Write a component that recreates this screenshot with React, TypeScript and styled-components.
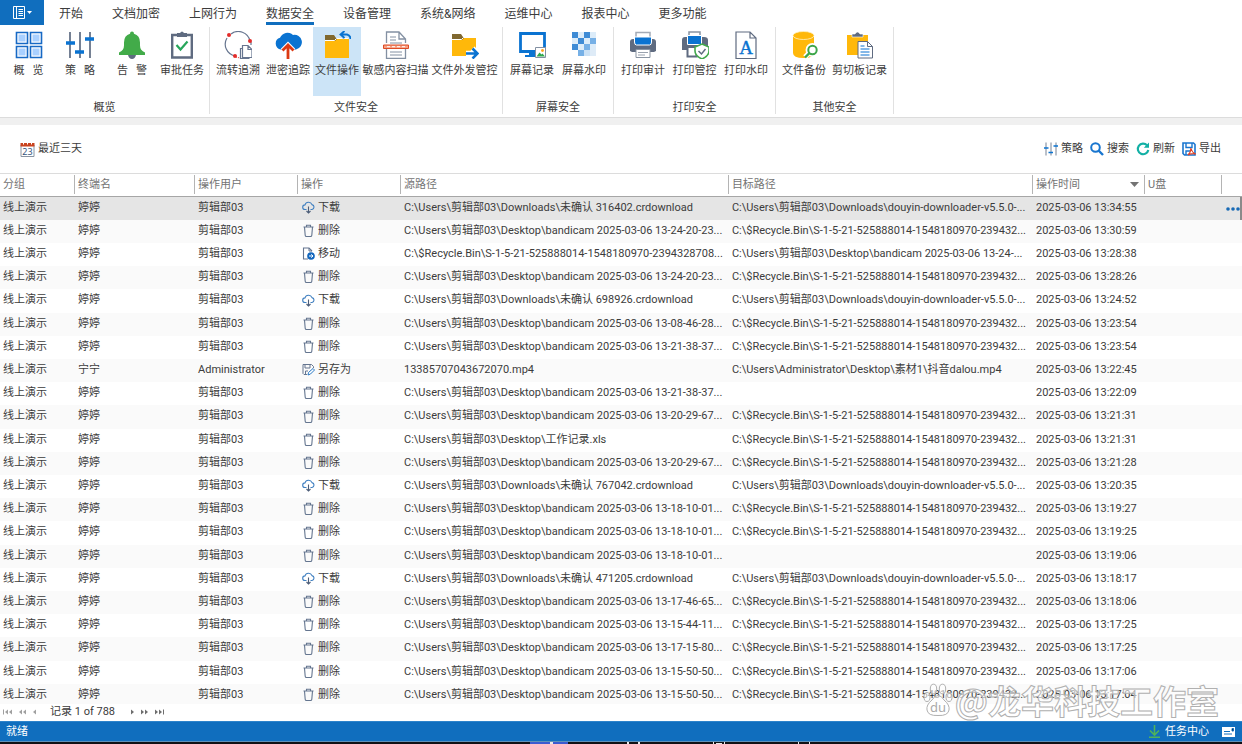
import React from "react";
import styled, { createGlobalStyle } from "styled-components";

const Global = createGlobalStyle`
  * { box-sizing: border-box; }
  html, body { margin: 0; background: #fff; }
  body, button, table {
    font-family: Roboto, "Noto Sans CJK SC", sans-serif;
    font-size: 11px;
    line-height: 16px;
    color: #3c3c3c;
  }
  button { border: 0; padding: 0; background: none; cursor: pointer; }
  svg { display: block; flex: none; }
`;

const Page = styled.div`
  position: relative;
  display: flex;
  flex-direction: column;
  height: 100vh;
  overflow: hidden;
`;

const TabBar = styled.nav`
  display: flex;
  align-items: stretch;
  height: 25px;
  flex: none;
  gap: 29px;
`;

const AppButton = styled.button`
  display: flex;
  align-items: center;
  justify-content: center;
  gap: 2px;
  width: 44px;
  margin-right: -14px;
  background: #106ebe;
`;

const Tab = styled.button<{ $active?: boolean }>`
  font-size: 12px;
  padding-top: 5px;
  white-space: nowrap;
  border-bottom: 3px solid ${(p) => (p.$active ? "#106ebe" : "transparent")};
`;

const Ribbon = styled.div`
  display: flex;
  flex: none;
  height: 93px;
  padding: 2px 0 3px;
  border-bottom: 1px solid #dcdcdc;
`;

const Group = styled.section`
  display: flex;
  flex-direction: column;
  justify-content: space-between;
  padding: 0 3px;
  border-right: 1px solid #e1e1e1;
`;

const GroupItems = styled.div`
  display: flex;
`;

const GroupTitle = styled.div`
  text-align: center;
  line-height: 12px;
`;

const RibbonButton = styled.button<{ $width: number; $active?: boolean }>`
  display: flex;
  flex-direction: column;
  align-items: center;
  gap: 4px;
  width: ${(p) => p.$width}px;
  height: 69px;
  padding-top: 4px;
  white-space: pre;
  background: ${(p) => (p.$active ? "#cce4f7" : "none")};
`;

const Band = styled.div`
  flex: none;
  height: 7px;
  background: #f0f0f0;
`;

const Toolbar = styled.div`
  display: flex;
  flex: none;
  align-items: center;
  justify-content: space-between;
  height: 48px;
  padding: 0 21px 0 20px;
`;

const Tools = styled.div`
  display: flex;
  gap: 7px;
`;

const ToolButton = styled.button`
  display: flex;
  align-items: center;
  gap: 3px;
`;

const TableArea = styled.main`
  flex: 1;
  min-height: 0;
  overflow: hidden;
  border-top: 1px solid #dcdcdc;
`;

const Table = styled.table`
  width: 100%;
  table-layout: fixed;
  border-collapse: separate;
  border-spacing: 0;
`;

const Col = styled.col<{ $width?: string }>`
  width: ${(p) => p.$width ?? "auto"};
`;

const HeadCell = styled.th`
  height: 23px;
  padding: 1px 0 2px;
  border-bottom: 1px solid #a6a6a6;
  font-weight: 400;
  text-align: left;
  color: #737373;
`;

const HeadInner = styled.div<{ $last?: boolean }>`
  display: flex;
  align-items: center;
  justify-content: space-between;
  height: 19px;
  padding: 0 5px 0 3px;
  border-right: ${(p) => (p.$last ? "0" : "1px solid #b4b4b4")};
`;

const Row = styled.tr<{ $selected?: boolean }>`
  height: 23px;
  background: ${(p) => (p.$selected ? "#e5e5e5" : "#fff")};
  &:nth-child(even) { background: #fafafa; }
  &:nth-child(5n) { height: 24px; }
`;

const Cell = styled.td`
  padding: 0 0 2px 3px;
  white-space: nowrap;
`;

const Action = styled.div`
  display: flex;
  align-items: center;
  gap: 3px;
  padding-left: 1px;
`;

const MoreCell = styled.td`
  padding: 0;
`;

const MoreButton = styled.button`
  display: flex;
  align-items: center;
  justify-content: flex-end;
  width: 100%;
  height: 23px;
  border-right: 2px solid #8a8a8a;
`;

const Pager = styled.footer`
  display: flex;
  align-items: center;
  flex: none;
  height: 17px;
  padding: 0 0 1px 2px;
  gap: 6px;
  background: #fff;
`;

const PagerText = styled.span`
  margin: 0 10px 0 8px;
`;

const PagerButton = styled.button`
  display: flex;
  align-items: center;
`;

const StatusBar = styled.div`
  display: flex;
  flex: none;
  align-items: center;
  justify-content: space-between;
  height: 21px;
  padding: 0 7px 0 6px;
  background: #106ebe;
  border-top: 1px solid #2d83cb;
  border-bottom: 1px solid #5f91b8;
  color: #fff;
`;

const StatusRight = styled.div`
  display: flex;
  align-items: center;
  gap: 13px;
`;

const TaskButton = styled.button`
  display: flex;
  align-items: center;
  gap: 4px;
  color: #fff;
`;

const Taskbar = styled.div`
  display: flex;
  flex: none;
  height: 2px;
  padding-left: 530px;
  background: #101014;
`;

const Watermark = styled.div`
  position: absolute;
  right: 23px;
  bottom: 20px;
  display: flex;
  align-items: center;
  gap: 2px;
  pointer-events: none;
  font-family: "Noto Sans CJK SC", sans-serif;
  font-size: 33px;
  line-height: 48px;
  font-weight: 700;
  color: rgba(255, 255, 255, 0.6);
  -webkit-text-stroke: 1px #b0b0b0;
`;

const BLUE = "#0a73d1";
const SLATE = "#5f6b80";

function Svg({ size = 28, children, box }: { size?: number; box?: number; children: React.ReactNode }) {
  const b = box ?? size;
  return (
    <svg width={size} height={size} viewBox={`0 0 ${b} ${b}`} fill="none" aria-hidden="true">
      {children}
    </svg>
  );
}

const sliders = (
  <>
    <path d="M4 1v26M14 1v26M24 1v26" stroke="#53627a" strokeWidth="1.6" />
    <path d="M0 12h9M9 21h9M19 8h9" stroke={BLUE} strokeWidth="3.4" />
  </>
);

const folder = (
  <>
    <path d="M2 4h9l2 3h12v4H2z" fill="#80682f" />
    <path d="M2 10h10l2-2h12v19H2z" fill="#ffb80a" />
    <path d="M2 9.500h9.500l2-2H26" stroke="#fff" />
  </>
);

const printer = (
  <>
    <path d="M7 8V1.5h14V8" fill="#fff" stroke="#a4abb6" strokeWidth="1.5" />
    <path d="M1 11q0-3 3-3h20q3 0 3 3v9l-2 1H3l-2-1z" fill={SLATE} />
    <path d="M5.500 6h17v5q0 3-2 3h-13q-2 0-2-3z" fill={BLUE} stroke="#fff" />
    <path d="M7 18.500h14V26.500H7z" fill="#fff" stroke="#8994a2" />
    <path d="M9 21.500h10M9 24h7" stroke="#9aa3af" />
  </>
);

const icons: Record<string, React.ReactNode> = {
  overview: (
    <g stroke="#1769c5" strokeWidth="1.6">
      <path d="M1.500 1.500h11v11h-11zM15.500 1.500h11v11h-11zM1.500 15.500h11v11h-11zM15.500 15.500h11v11h-11z" fill="#fff" />
      <path d="M3.500 3.500h7v7h-7zM17.500 3.500h7v7h-7zM3.500 17.500h7v7h-7zM17.500 17.500h7v7h-7z" fill="#a9d0ff" stroke="none" />
    </g>
  ),
  policy: sliders,
  alert: (
    <>
      <path d="M10 24h8q-1 4-4 4t-4-4z" fill={SLATE} />
      <path d="M14 .5q2 0 2 2.3 6 1.800 6 8.700v3q0 5 5 7v2.500H1v-2.500q5-2 5-7v-3q0-6.900 6-8.700 0-2.300 2-2.300z" fill="#42ab49" />
    </>
  ),
  approve: (
    <>
      <path d="M4.200 4h19.600v22.500H4.200z" fill="#fff" stroke={SLATE} strokeWidth="2.400" />
      <path d="M9 6V2h3q2-3 4 0h3v4z" fill={SLATE} />
      <path d="m8.500 14 4 4.500 7-8" stroke="#27a65b" strokeWidth="2.200" />
    </>
  ),
  trace: (
    <>
      <path d="M7 3a12 12 0 0 1 19 7M3 7a12 12 0 0 0 8 18M27 11v3" stroke="#66758f" strokeWidth="1.200" />
      <path d="M12 26l4 1" stroke="#df4137" strokeDasharray="1 1" />
      <g fill="#e32b29"><circle cx="5" cy="4" r="2" /><circle cx="26" cy="10" r="2" /><circle cx="11" cy="25" r="2" /></g>
      <path d="M20 14.500h5.500l4 4v8H20zM25.500 14.500v4h4" transform="translate(-1.500 0)" fill="#fff" stroke="#66758f" strokeWidth="1.200" />
      <path d="M18.500 17.500h-2v10h9" stroke="#66758f" strokeWidth="1.200" />
    </>
  ),
  leak: (
    <>
      <path d="M7 18.500a6 6 0 0 1-1-11.700A8 8 0 0 1 19 4a7 7 0 1 1 3 14.500z" fill={BLUE} />
      <path d="M14 28V14M8.500 19.500l5.500-5.500 5.500 5.500" stroke="#fff" strokeWidth="4.800" />
      <path d="M14 28V14M8.500 19.500l5.500-5.500 5.500 5.500" stroke="#dc3912" strokeWidth="2.800" />
    </>
  ),
  fileop: (
    <>
      {folder}
      <path d="M17.500 3.500H24q3.500 1 3.500 4.500M21.500 0 17.500 3.500 21.500 7" stroke="#cce4f7" strokeWidth="4" />
      <path d="M17.500 3.500H24q3.500 1 3.500 4.500M21.500 0 17.500 3.500 21.500 7" stroke={BLUE} strokeWidth="1.900" />
    </>
  ),
  scan: (
    <>
      <path d="M4.500 12V1H17l6.500 7v4M4.500 18v9.300h19V18M17 1v7h6.500" stroke="#8390a2" strokeWidth="1.300" />
      <path d="M8 6h6M8 9h6M8 12h12M8 21h12M8 24h12" stroke="#8390a2" />
      <path d="M1.500 14h25v3.500h-25z" fill="#f7a184" stroke="#dd4b25" />
      <path d="M5 15.700h18" stroke="#fff" strokeDasharray="3 2" />
    </>
  ),
  send: (
    <>
      <path d="M1 3h9l2 3h13v4H1z" fill="#80682f" />
      <path d="M1 9h10l2-2h12v18H1z" fill="#ffb80a" />
      <path d="M1 8.500h9.500l2-2H25" stroke="#fff" />
      <path d="M15 22.500h11M21.500 17.500l5 5-5 5" stroke="#fff" strokeWidth="5.500" />
      <path d="M15 22.500h11M21.500 17.500l5 5-5 5" stroke={BLUE} strokeWidth="2.600" />
    </>
  ),
  screen: (
    <>
      <path d="M2.500 2.500h24v18h-24z" stroke={BLUE} strokeWidth="2.800" />
      <path d="M11 21h6v3h-6zM7 24h11v2H7z" fill={BLUE} />
      <path d="M17.500 16.500h10v10h-10z" fill="#fff" stroke="#8390a2" />
      <path d="m18.500 25.500 3-4 2 2 1-1 2.500 3z" fill="#31a84e" /><circle cx="24.500" cy="19.500" r="1.400" fill="#ffa51a" />
    </>
  ),
  mosaic: (
    <>
      <path d="M2 1h6v6H2zM14 1h6v6h-6zM8 7h6v6H8zM2 13h6v6H2z" fill="#3e8bd5" />
      <path d="M20 7h6v6h-6zM14 13h6v6h-6zM8 19h6v6H8z" fill="#76b0e6" />
      <path d="M20 1h6v6h-6zM8 1h6v6H8zM14 7h6v6h-6zM2 7h6v6H2zM8 13h6v6H8zM20 13h6v6h-6z" fill="#bad9f4" opacity=".5" />
      <path d="M14 19h6v6h-6z" fill="#cbe1f5" /><path d="M20 19h6v6h-6z" fill="#deebf7" />
    </>
  ),
  printer,
  printctl: (
    <>
      <path d="M8 6V1h11v5" fill="#fff" stroke="#8994a2" strokeWidth="1.500" />
      <path d="M1 9q0-3 3-3h19q4 0 4 3v10H1z" fill={SLATE} />
      <path d="M6.500 4.500h14v9h-14z" fill={BLUE} stroke="#fff" />
      <path d="M6.500 16h9v9.500h-9z" fill="#fff" stroke={SLATE} strokeWidth="2" />
      <path d="m21 13 7 3v4q0 5-7 8-7-3-7-8v-4z" fill="#fff" stroke="#43a94d" strokeWidth="1.600" />
      <path d="m17.500 20 3 3 4-5" stroke={SLATE} strokeWidth="1.500" />
    </>
  ),
  printwm: (
    <>
      <path d="M4 1h14l6 6v20.500H4zM18 1v6h6" fill="#fff" stroke={SLATE} strokeWidth="1.200" />
      <text x="14" y="23" textAnchor="middle" fontFamily="Liberation Serif, serif" fontSize="19" fill={BLUE} stroke={BLUE} strokeWidth=".4">A</text>
    </>
  ),
  backup: (
    <>
      <path d="M3 4v18q0 5 10.500 5T24 22V4z" fill="#ffb80a" />
      <ellipse cx="13.500" cy="4.500" rx="10.500" ry="4" fill="#ffb80a" stroke="#fff1c4" strokeWidth=".8" />
      <circle cx="22.500" cy="19" r="4.500" fill="#fff" stroke="#fff" strokeWidth="5" />
      <path d="m19 22-4 4" stroke="#fff" strokeWidth="5" />
      <circle cx="22.500" cy="19" r="4.200" stroke="#3da64a" strokeWidth="2" />
      <path d="m19.500 22-4.500 4.500" stroke="#3da64a" strokeWidth="2.400" />
    </>
  ),
  clip: (
    <>
      <path d="M1 4h21v20H1z" fill="#ffb80a" />
      <path d="M6 6V3h3q2.500-4 5 0h3v3z" fill={SLATE} stroke="#fff" strokeWidth=".6" />
      <path d="M12 10.500h9.500l5 5V27H12z" fill="#fff" stroke={SLATE} />
      <path d="M21.500 10.500v5h5" stroke={SLATE} />
      <path d="M14.500 15h4M14.500 18h9M14.500 21h9M14.500 24h9" stroke={BLUE} strokeWidth="1.200" />
    </>
  ),
};

type Item = { icon: string; label: string; width: number; active?: boolean };
const groups: { title: string; items: Item[] }[] = [
  {
    title: "概览",
    items: [
      { icon: "overview", label: "概   览", width: 51 },
      { icon: "policy", label: "策   略", width: 52 },
      { icon: "alert", label: "告   警", width: 52 },
      { icon: "approve", label: "审批任务", width: 48 },
    ],
  },
  {
    title: "文件安全",
    items: [
      { icon: "trace", label: "流转追溯", width: 50 },
      { icon: "leak", label: "泄密追踪", width: 50 },
      { icon: "fileop", label: "文件操作", width: 48, active: true },
      { icon: "scan", label: "敏感内容扫描", width: 69 },
      { icon: "send", label: "文件外发管控", width: 69 },
    ],
  },
  {
    title: "屏幕安全",
    items: [
      { icon: "screen", label: "屏幕记录", width: 52 },
      { icon: "mosaic", label: "屏幕水印", width: 52 },
    ],
  },
  {
    title: "打印安全",
    items: [
      { icon: "printer", label: "打印审计", width: 52 },
      { icon: "printctl", label: "打印管控", width: 51 },
      { icon: "printwm", label: "打印水印", width: 52 },
    ],
  },
  {
    title: "其他安全",
    items: [
      { icon: "backup", label: "文件备份", width: 50 },
      { icon: "clip", label: "剪切板记录", width: 61 },
    ],
  },
];

const tabs = ["开始", "文档加密", "上网行为", "数据安全", "设备管理", "系统&网络", "运维中心", "报表中心", "更多功能"];

const user = "C:\\Users\\剪辑部03\\";
const recycle = "C:\\$Recycle.Bin\\S-1-5-21-525888014-1548180970-239432...";
const douyin = user + "Downloads\\douyin-downloader-v5.5.0-...";
const cam = (s: string) => user + "Desktop\\bandicam 2025-03-06 " + s + "...";
const dl = (n: string) => user + "Downloads\\未确认 " + n + ".crdownload";

type Kind = "下载" | "删除" | "移动" | "另存为";
const rows: [Kind, string, string, string][] = [
  ["下载", dl("316402"), douyin, "13:34:55"],
  ["删除", cam("13-24-20-23"), recycle, "13:30:59"],
  ["移动", "C:\\$Recycle.Bin\\S-1-5-21-525888014-1548180970-2394328708...", user + "Desktop\\bandicam 2025-03-06 13-24-...", "13:28:38"],
  ["删除", cam("13-24-20-23"), recycle, "13:28:26"],
  ["下载", dl("698926"), douyin, "13:24:52"],
  ["删除", cam("13-08-46-28"), recycle, "13:23:54"],
  ["删除", cam("13-21-38-37"), recycle, "13:23:54"],
  ["另存为", "13385707043672070.mp4", "C:\\Users\\Administrator\\Desktop\\素材1\\抖音dalou.mp4", "13:22:45"],
  ["删除", cam("13-21-38-37"), "", "13:22:09"],
  ["删除", cam("13-20-29-67"), recycle, "13:21:31"],
  ["删除", user + "Desktop\\工作记录.xls", recycle, "13:21:31"],
  ["删除", cam("13-20-29-67"), recycle, "13:21:28"],
  ["下载", dl("767042"), douyin, "13:20:35"],
  ["删除", cam("13-18-10-01"), recycle, "13:19:27"],
  ["删除", cam("13-18-10-01"), recycle, "13:19:25"],
  ["删除", cam("13-18-10-01"), "", "13:19:06"],
  ["下载", dl("471205"), douyin, "13:18:17"],
  ["删除", cam("13-17-46-65"), recycle, "13:18:06"],
  ["删除", cam("13-15-44-11"), recycle, "13:17:25"],
  ["删除", cam("13-17-15-80"), recycle, "13:17:25"],
  ["删除", cam("13-15-50-50"), recycle, "13:17:06"],
  ["删除", cam("13-15-50-50"), recycle, "13:17:04"],
];

const actionIcons: Record<Kind, React.ReactNode> = {
  下载: (
    <>
      <path d="M4.500 8.500H3a2.300 2.300 0 0 1 0-4.600A3.700 3.700 0 0 1 10 3.600a2.500 2.500 0 0 1 0 4.900H8.500" stroke="#3f7fc0" strokeWidth="1.100" />
      <path d="M6.500 5.500v6.500M4.500 10l2 2 2-2" stroke="#4c5d78" strokeWidth="1.100" />
    </>
  ),
  删除: <path d="M1.500 3h10M4.500 3V1.200h4V3M2.500 3l.700 8.200q.100 1.300 1.300 1.300h4q1.200 0 1.300-1.300L10.500 3" stroke="#64758f" strokeWidth="1.100" />,
  移动: (
    <>
      <path d="M6 12H1.500V1H7l3 3" stroke="#64758f" strokeWidth="1.100" />
      <path d="M7 1v3h3" stroke="#64758f" />
      <circle cx="9" cy="9" r="3.800" fill="#1266bd" />
      <path d="M7 9h4M9.300 7.300 11 9l-1.700 1.700" stroke="#fff" />
    </>
  ),
  另存为: (
    <>
      <path d="M5 11.500H2L1 10.500v-9h8.500l2 2V5M3 1.500V5h5V1.500M3.500 11V8H6" stroke="#64758f" />
      <path d="m6 12 .5-2.500 4.500-4 1.500 1.500L8.500 11z" fill="#fff" stroke="#2878c4" />
    </>
  ),
};

const columns: [string, string | undefined][] = [
  ["分组", "75px"],
  ["终端名", "120px"],
  ["操作用户", "103px"],
  ["操作", "103px"],
  ["源路径", "26.4%"],
  ["目标路径", undefined],
  ["操作时间", "112px"],
  ["U盘", "77px"],
  ["", "20px"],
];

// Record navigation arrows: count of triangles, direction, and optional end bar.
function Arrow({ n, back, bar, label }: { n: number; back?: boolean; bar?: boolean; label: string }) {
  const w = n * 4 + (bar ? 2 : 0);
  return (
    <PagerButton aria-label={label}>
      <svg width={w} height="6" viewBox={`0 0 ${w} 6`} fill={back ? "#a0a0a0" : "#6e6e6e"}>
        <g transform={back ? `matrix(-1 0 0 1 ${w} 0)` : undefined}>
          {Array.from({ length: n }, (_, i) => (
            <path key={i} d={`M${i * 4} 0.500l3 2.500l-3 2.500z`} />
          ))}
          {bar && <path d={`M${w - 2} 0.500h1v5h-1z`} />}
        </g>
      </svg>
    </PagerButton>
  );
}

export default function App() {
  return (
    <Page>
      <Global />
      <TabBar>
        <AppButton aria-label="菜单">
          <svg width="12" height="13" viewBox="0 0 12 13" fill="none" stroke="#fff">
            <path d="M.5.5h11v12H.5zM3.500 .5v12M5.500 3.500H10M5.500 5.500H10M5.500 7.500H10M5.500 9.500H10" />
          </svg>
          <svg width="5" height="3" viewBox="0 0 5 3" fill="#fff"><path d="M0 0h5L2.500 3z" /></svg>
        </AppButton>
        {tabs.map((t) => (
          <Tab key={t} $active={t === "数据安全"}>{t}</Tab>
        ))}
      </TabBar>
      <Ribbon>
        {groups.map((g) => (
          <Group key={g.title}>
            <GroupItems>
              {g.items.map((it) => (
                <RibbonButton key={it.label} $width={it.width} $active={it.active}>
                  <Svg>{icons[it.icon]}</Svg>
                  {it.label}
                </RibbonButton>
              ))}
            </GroupItems>
            <GroupTitle>{g.title}</GroupTitle>
          </Group>
        ))}
      </Ribbon>
      <Band />
      <Toolbar>
        <ToolButton>
          <Svg size={15}>
            <path d="M1 3h13v11.500H1z" fill="#fff" stroke="#8994a2" />
            <path d="M.5 1h14v3.500H.5z" fill="#c9431e" />
            <path d="M3.500 0v2.500M7.500 0v2.500M11.500 0v2.500" stroke="#fff" />
            <text x="7.500" y="13" textAnchor="middle" fontFamily="Noto Sans, sans-serif" fontSize="9" fill="#35547c">23</text>
          </Svg>
          最近三天
        </ToolButton>
        <Tools>
          <ToolButton>
            <Svg size={14} box={28}>{sliders}</Svg>
            策略
          </ToolButton>
          <ToolButton>
            <Svg size={14}>
              <circle cx="5.500" cy="5.500" r="4.300" stroke="#1976cf" strokeWidth="2" />
              <path d="m8.500 8.500 4.500 4.500" stroke="#1976cf" strokeWidth="2.400" />
            </Svg>
            搜索
          </ToolButton>
          <ToolButton>
            <Svg size={14}>
              <path d="M11 3.300A5.300 5.300 0 1 0 12.300 8" stroke="#13b0a5" strokeWidth="2.200" />
              <path d="M13 .5v5.300H7.800z" fill="#13b0a5" />
            </Svg>
            刷新
          </ToolButton>
          <ToolButton>
            <Svg size={14}>
              <path d="M1 1h10.500L13 2.500V13H2.500L1 11.500z" stroke="#1976cf" strokeWidth="1.600" />
              <path d="M4 1v4.500h6V1M4 13V9h4" stroke="#1976cf" strokeWidth="1.400" />
              <path d="M6 13q3-3 3-7 1 5 5 6-4-1-8 1z" fill="#fff" stroke="#e04225" strokeWidth="1.200" />
            </Svg>
            导出
          </ToolButton>
        </Tools>
      </Toolbar>
      <TableArea>
        <Table>
          <colgroup>
            {columns.map(([name, w]) => <Col key={name} $width={w} />)}
          </colgroup>
          <thead>
            <tr>
              {columns.map(([name], i) => (
                <HeadCell key={name}>
                  <HeadInner $last={i === columns.length - 1}>
                    {name}
                    {name === "操作时间" && (
                      <svg width="9" height="5" viewBox="0 0 9 5" fill="#737373"><path d="M0 0h9L4.500 5z" /></svg>
                    )}
                  </HeadInner>
                </HeadCell>
              ))}
            </tr>
          </thead>
          <tbody>
            {rows.map(([kind, src, dst, time], i) => {
              const admin = kind === "另存为";
              return (
                <Row key={i} $selected={i === 0}>
                  <Cell>线上演示</Cell>
                  <Cell>{admin ? "宁宁" : "婷婷"}</Cell>
                  <Cell>{admin ? "Administrator" : "剪辑部03"}</Cell>
                  <Cell>
                    <Action>
                      <Svg size={13}>{actionIcons[kind]}</Svg>
                      {kind}
                    </Action>
                  </Cell>
                  <Cell>{src}</Cell>
                  <Cell>{dst}</Cell>
                  <Cell>2025-03-06 {time}</Cell>
                  <Cell />
                  <MoreCell>
                    {i === 0 && (
                      <MoreButton aria-label="更多">
                        <svg width="14" height="4" viewBox="0 0 14 4" fill="#1769b5">
                          <circle cx="2" cy="2" r="1.800" /><circle cx="7" cy="2" r="1.800" /><circle cx="12" cy="2" r="1.800" />
                        </svg>
                      </MoreButton>
                    )}
                  </MoreCell>
                </Row>
              );
            })}
          </tbody>
        </Table>
      </TableArea>
      <Pager>
        <Arrow n={2} back bar label="第一条" />
        <Arrow n={2} back label="上一页" />
        <Arrow n={1} back label="上一条" />
        <PagerText>记录 1 of 788</PagerText>
        <Arrow n={1} label="下一条" />
        <Arrow n={2} label="下一页" />
        <Arrow n={2} bar label="最后一条" />
      </Pager>
      <StatusBar>
        <span>就绪</span>
        <StatusRight>
          <TaskButton>
            <Svg size={13}>
              <path d="M6.500 0v10M2 5.500l4.500 4.500L11 5.500M1 12.300h11" stroke="#4fb35b" strokeWidth="1.600" />
            </Svg>
            任务中心
          </TaskButton>
          <svg width="13" height="10" viewBox="0 0 13 10">
            <path d="M0 0h13v10H0z" fill="#fff" />
            <path d="M2 4.500h6M2 7h8M10 1.500h1.500V4H10z" stroke="#106ebe" />
          </svg>
        </StatusRight>
      </StatusBar>
      <Taskbar>
        <svg width="310" height="2" viewBox="0 0 310 2">
          <path d="M0 0h38v2H0z" fill="#3c5ad0" />
          <path d="M20 0h3v2h-3zM97 0h2v2h-2zM108 0h2v2h-2zM183 0h1v2h-1zM186 1h6v1h-6zM194 0h1v2h-1zM268 0h1v2h-1zM279 0h1v2h-1z" fill="#e8e8e8" />
        </svg>
      </Taskbar>
      <Watermark>
        <svg width="30" height="34" viewBox="0 0 30 34" fill="rgba(255,255,255,.6)" stroke="#b0b0b0">
          <ellipse cx="4" cy="14" rx="3" ry="4.500" />
          <ellipse cx="10.500" cy="6" rx="3.200" ry="4.800" />
          <ellipse cx="19.500" cy="6" rx="3.200" ry="4.800" />
          <ellipse cx="26" cy="14" rx="3" ry="4.500" />
          <path d="M15 12.500q3.500 0 6 4.500 6 5 5 10-1 6-11 5.500Q5 33 4 27q-1-5 5-10 2.500-4.500 6-4.500z" />
          <text x="15" y="29" textAnchor="middle" fontFamily="Noto Sans, sans-serif" fontSize="13" fontWeight="400" fill="#aaa" stroke="none">du</text>
        </svg>
        @龙华科技工作室
      </Watermark>
    </Page>
  );
}
